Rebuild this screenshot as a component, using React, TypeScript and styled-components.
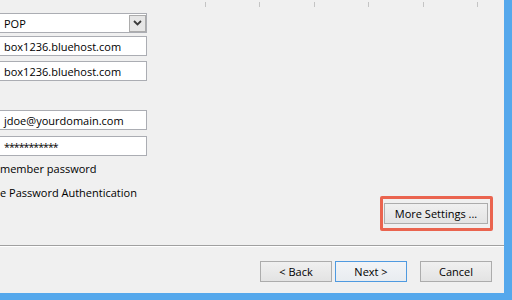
import React from "react";
import styled, { createGlobalStyle } from "styled-components";

const Global = createGlobalStyle`
  html, body { margin: 0; padding: 0; background: #f0f0f0; }
  body {
    width: 512px; height: 300px; overflow: hidden;
    font-family: "Open Sans", "Noto Sans", "Liberation Sans", sans-serif;
    font-size: 11px; color: #000;
  }
`;

const Frame = styled.div`
  width: 512px;
  height: 300px;
  box-sizing: border-box;
  background: #55a8ec;
  padding: 0 8px 7px 0;
  display: flex;
`;

const Client = styled.div`
  flex: 1;
  background: #f0f0f0;
  display: flex;
  flex-direction: column;
  overflow: hidden;
`;

const Body = styled.div`
  height: 245px;
  display: flex;
  flex-direction: column;
`;

const TickRow = styled.div`
  display: flex;
  gap: 53.4px;
  padding: 2px 0 0 205px;
  height: 11px;
  box-sizing: border-box;
`;

const Tick = styled.span`
  width: 1px;
  height: 5px;
  background: #c4c4c4;
`;

const Main = styled.div`
  flex: 1;
  display: flex;
`;

const Form = styled.div`
  width: 149px;
  margin-left: -2px;
  display: flex;
  flex-direction: column;
  padding-top: 2px;
`;

const Field = styled.div<{ $gap: number }>`
  height: 20px;
  box-sizing: border-box;
  margin-top: ${(p) => p.$gap}px;
  background: #fff;
  border: 1px solid #abadb3;
  padding: 0 5px;
  display: flex;
  align-items: center;
  white-space: nowrap;
  overflow: hidden;
  font-size: 11px;
`;

const Secret = styled.span`
  font-size: 10.5px;
  letter-spacing: -0.9px;
  padding-top: 2px;
`;

const Combo = styled(Field)`
  justify-content: space-between;
  padding-right: 0;
`;

const DropButton = styled.div`
  width: 17px;
  height: 17px;
  box-sizing: border-box;
  background: #e6e6e6;
  border: 1px solid #acacac;
  display: flex;
  align-items: center;
  justify-content: center;
`;

const Label = styled.div<{ $gap: number }>`
  margin: ${(p) => p.$gap}px 0 0 2px;
  line-height: 16px;
  white-space: nowrap;
  font-size: 11px;
`;

const Side = styled.div`
  flex: 1;
  display: flex;
  flex-direction: column;
  justify-content: flex-end;
  align-items: flex-end;
  padding: 0 11px 14px 0;
`;

const Highlight = styled.div`
  border: 3px solid #ea644f;
  border-radius: 2px;
  padding: 4px 2px 4px 1px;
  display: flex;
`;

const Button = styled.button<{ $default?: boolean; $w: number }>`
  width: ${(p) => p.$w}px;
  height: 21px;
  box-sizing: border-box;
  font-family: inherit;
  font-size: 11px;
  color: #000;
  padding: 0;
  background: ${(p) => (p.$default ? "linear-gradient(#f2f4f7, #e8ecf0)" : "linear-gradient(#f0f0f0, #e3e3e3)")};
  border: 1px solid ${(p) => (p.$default ? "#4f9ae0" : "#acacac")};
  display: flex;
  align-items: center;
  justify-content: center;
  white-space: nowrap;
`;

const Separator = styled.div`
  height: 1px;
  background: #a0a0a0;
  border-bottom: 1px solid #ffffff;
`;

const Footer = styled.div`
  flex: 1;
  display: flex;
  justify-content: flex-end;
  align-items: flex-start;
  padding: 14px 12px 0 0;
`;

const NavPair = styled.div`
  display: flex;
  gap: 3px;
  margin-right: 13px;
`;

const Chevron = () => (
  <svg width="9" height="6" viewBox="0 0 9 6">
    <polyline points="1,1 4.5,4.5 8,1" fill="none" stroke="#3a3a3a" strokeWidth="1.8" />
  </svg>
);

export default function App() {
  return (
    <>
      <Global />
      <Frame>
        <Client>
          <Body>
            <TickRow>
              {[0, 1, 2, 3, 4, 5].map((i) => (
                <Tick key={i} />
              ))}
            </TickRow>
            <Main>
              <Form>
                <Combo $gap={0}>
                  <span>POP</span>
                  <DropButton>
                    <Chevron />
                  </DropButton>
                </Combo>
                <Field $gap={3}>box1236.bluehost.com</Field>
                <Field $gap={5}>box1236.bluehost.com</Field>
                <Field $gap={29}>jdoe@yourdomain.com</Field>
                <Field $gap={6}>
                  <Secret>***********</Secret>
                </Field>
                <Label $gap={5}>member password</Label>
                <Label $gap={8}>e Password Authentication</Label>
              </Form>
              <Side>
                <Highlight>
                  <Button $w={104}>More Settings ...</Button>
                </Highlight>
              </Side>
            </Main>
          </Body>
          <Separator />
          <Footer>
            <NavPair>
              <Button $w={72}>&lt; Back</Button>
              <Button $w={72} $default>
                Next &gt;
              </Button>
            </NavPair>
            <Button $w={72}>Cancel</Button>
          </Footer>
        </Client>
      </Frame>
    </>
  );
}
